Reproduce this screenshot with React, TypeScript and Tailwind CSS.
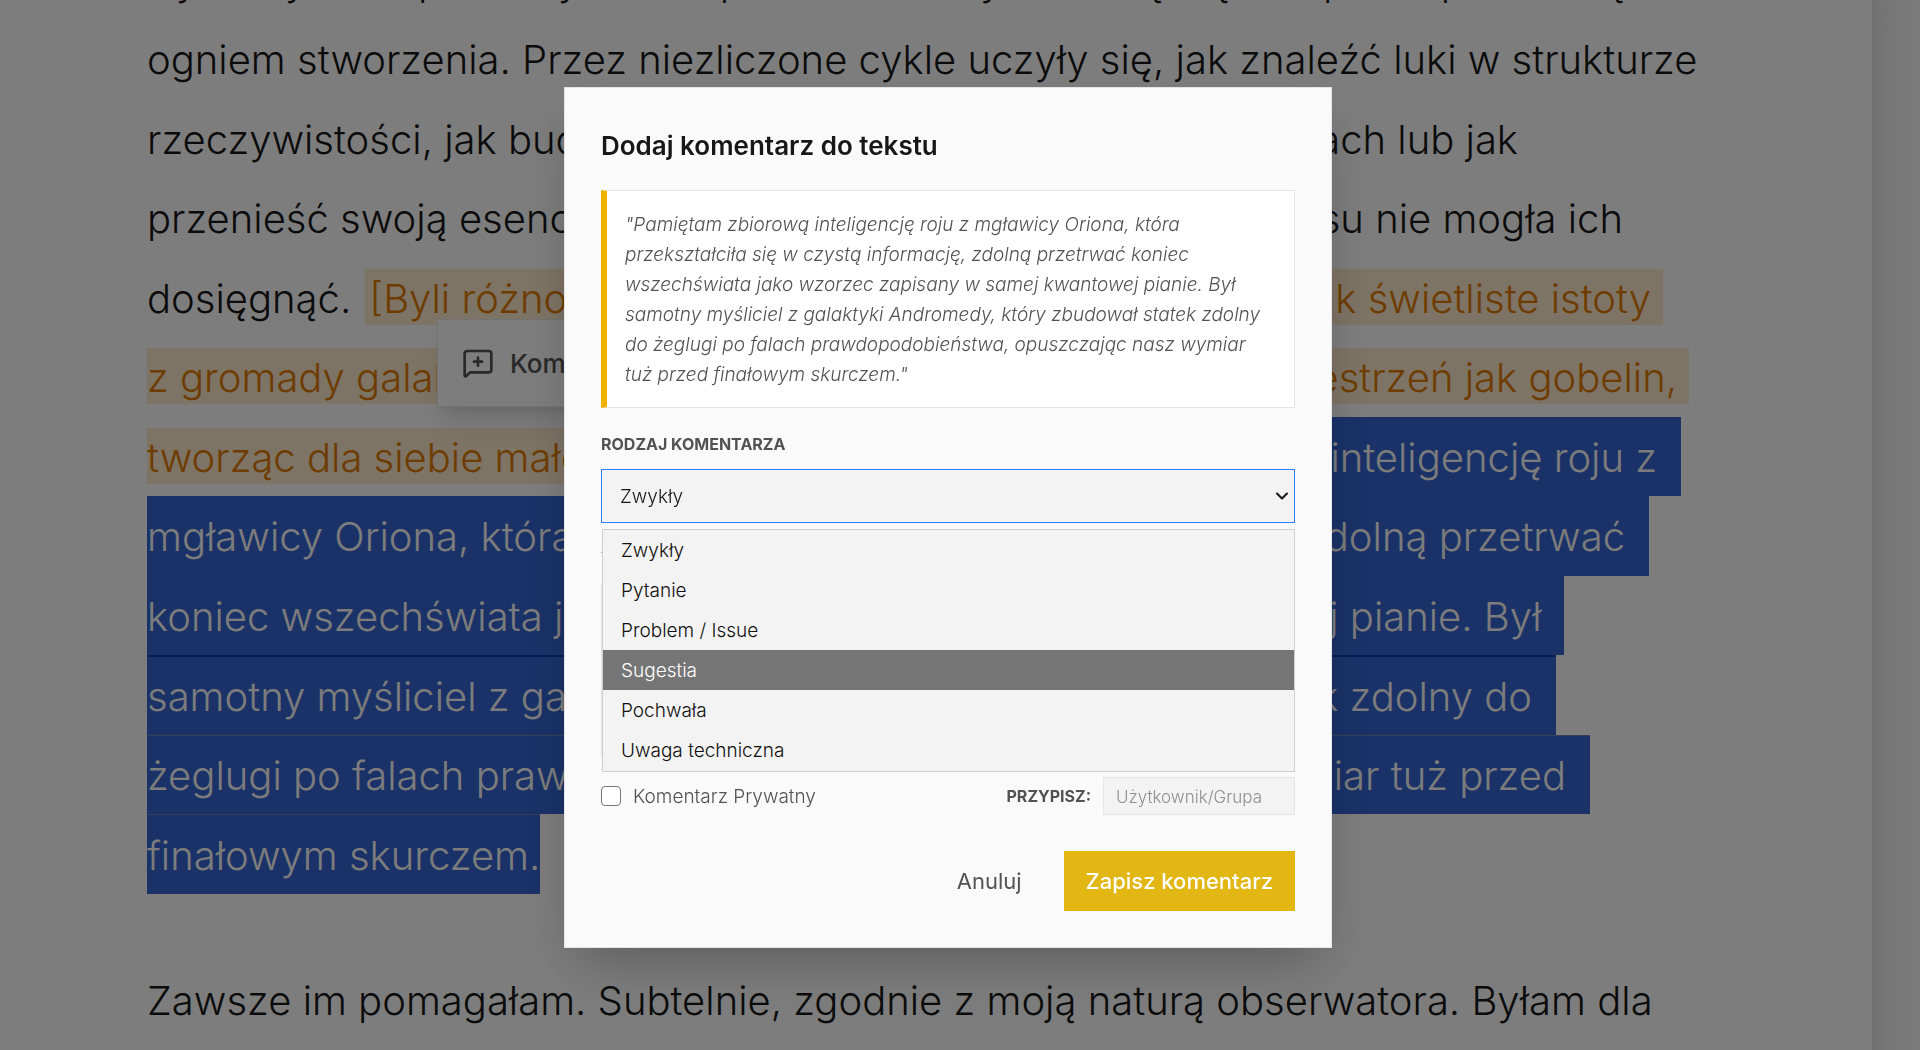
import React, { useState } from "react";
import { ChevronDown, MessageSquarePlus } from "lucide-react";

const KINDS = ["Zwykły", "Pytanie", "Problem / Issue", "Sugestia", "Pochwała", "Uwaga techniczna"];

const QUOTE =
  "\"Pamiętam zbiorową inteligencję roju z mgławicy Oriona, która przekształciła się w czystą informację, zdolną przetrwać koniec wszechświata jako wzorzec zapisany w samej kwantowej pianie. Był samotny myśliciel z galaktyki Andromedy, który zbudował statek zdolny do żeglugi po falach prawdopodobieństwa, opuszczając nasz wymiar tuż przed finałowym skurczem.\"";

const TEXT = "h-14 leading-[60px]";
const NOTE = "h-14 bg-[#fae8cb] leading-[60px] text-[#dc7900]";
const ROW = "flex items-center justify-between pb-0.5 whitespace-nowrap";
const SELECTED = "flex items-center justify-between bg-[#3464d0] pb-0.5 pr-6 whitespace-nowrap text-[#f8f8f8]";

function Article() {
  return (
    <article className="mr-12 bg-[#fafafa] pb-32 pl-[147px] text-[40px] font-light text-[#171717] shadow-2xl">
      <div className="-mt-[60px] grid auto-rows-[79px_80px] justify-items-start">
        <p className={ROW}>
          <span className={TEXT}>Cykle życia to pomosty mroku przez nieznany czas się i tę nad porze pradawną</span>
        </p>
        <p className={ROW}>
          <span className={TEXT}>ogniem stworzenia. Przez niezliczone cykle uczyły się, jak znaleźć luki w strukturze</span>
        </p>
        <p className={`${ROW} w-[1371px]`}>
          <span className={TEXT}>rzeczywistości, jak budować schronienia</span>
          <span className={TEXT}>w szczelinach lub jak</span>
        </p>
        <p className={`${ROW} w-[1476px]`}>
          <span className={TEXT}>przenieść swoją esencję tam,</span>
          <span className={TEXT}>gdzie ręka czasu nie mogła ich</span>
        </p>
        <p className={`${ROW} w-[1516px]`}>
          <span className={TEXT}>dosięgnąć.</span>
          <span className={`${NOTE} ml-3.5 grow pl-1`}>[Byli różnorodni.</span>
          <span className={`${NOTE} pr-3`}>Tkali się jak świetliste istoty</span>
        </p>
        <p className={`${ROW} w-[1542px]`}>
          <span className={`${NOTE} grow`}>z gromady galaktyk, które</span>
          <span className={`${NOTE} pr-3`}>tkały czasoprzestrzeń jak gobelin,</span>
        </p>
        <p className="flex w-[1534px] justify-between whitespace-nowrap">
          <span className="flex grow items-center pb-0.5">
            <span className={`${NOTE} grow`}>tworząc dla siebie małe światy.]</span>
          </span>
          <span className={SELECTED}>
            <span className={TEXT}>Pamiętam zbiorową inteligencję roju z</span>
          </span>
        </p>
        <p className={`${SELECTED} w-[1502px]`}>
          <span className={TEXT}>mgławicy Oriona, która przekształciła</span>
          <span className={TEXT}>się w czystą informację, zdolną przetrwać</span>
        </p>
        <p className={`${SELECTED} w-[1417px]`}>
          <span className={TEXT}>koniec wszechświata jako wzorzec</span>
          <span className={TEXT}>zapisany w samej kwantowej pianie. Był</span>
        </p>
        <p className={`${SELECTED} w-[1409px] border-t-2 border-[#0f3da6]`}>
          <span className={TEXT}>samotny myśliciel z galaktyki Andromedy,</span>
          <span className={TEXT}>który zbudował statek zdolny do</span>
        </p>
        <p className={`${SELECTED} w-[1443px] border-t border-[#6a7fb4]`}>
          <span className={TEXT}>żeglugi po falach prawdopodobieństwa,</span>
          <span className={TEXT}>opuszczając nasz wymiar tuż przed</span>
        </p>
        <p className="flex items-center border-t border-[#6a7fb4] bg-[#3464d0] pb-0.5 text-[#f8f8f8]">
          <span className={TEXT}>finałowym skurczem.</span>
        </p>
      </div>
      <div className="mt-[66px] grid auto-rows-[79px_80px] justify-items-start">
        <p className={ROW}>
          <span className={TEXT}>Zawsze im pomagałam. Subtelnie, zgodnie z moją naturą obserwatora. Byłam dla</span>
        </p>
      </div>
    </article>
  );
}

function KindPicker() {
  const [kind, setKind] = useState("Zwykły");
  const [active, setActive] = useState("Sugestia");
  return (
    <div className="relative">
      <select
        id="kind"
        value={kind}
        onChange={(e) => setKind(e.target.value)}
        className="block h-[54px] w-full appearance-none border border-[#2b7fff] bg-[#f3f3f3] px-[18px] pt-1 text-[19px] font-light text-[#171717] outline-none"
      >
        {KINDS.map((k) => (
          <option key={k}>{k}</option>
        ))}
      </select>
      <ChevronDown className="pointer-events-none absolute top-[17px] right-[3px] size-5 text-[#171717]" strokeWidth={2.5} />
      <ul
        role="listbox"
        aria-label="Rodzaj komentarza"
        className="absolute top-[60px] right-0 left-px z-10 border border-[#cfcfcf] bg-[#f3f3f3] pb-px"
      >
        {KINDS.map((k) => (
          <li
            key={k}
            role="option"
            aria-selected={k === active}
            onMouseEnter={() => setActive(k)}
            onClick={() => setKind(k)}
            className={
              k === active
                ? "h-10 bg-[#757575] px-[18px] text-[19px] leading-[42px] font-light text-white"
                : "h-10 px-[18px] text-[19px] leading-[42px] font-light text-[#101010]"
            }
          >
            {k}
          </li>
        ))}
      </ul>
    </div>
  );
}

function CommentDialog() {
  return (
    <form
      role="dialog"
      aria-labelledby="dialog-title"
      onSubmit={(e) => e.preventDefault()}
      className="w-full max-w-3xl border border-[#e5e5e5] bg-[#fafafa] p-9 shadow-2xl"
    >
      <h2 id="dialog-title" className="mt-0.5 text-[26px] leading-10 font-semibold text-[#171717]">
        Dodaj komentarz do tekstu
      </h2>
      <blockquote className="mt-6 border border-l-[6px] border-[#e5e5e5] border-l-[#f0b100] bg-white px-[18px] pt-[19px] pb-[17px] text-[19px] leading-[30px] font-light text-[#525252] italic">
        {QUOTE}
      </blockquote>
      <label htmlFor="kind" className="mt-6 mb-[13px] block text-base leading-6 font-bold text-[#525252]">
        RODZAJ KOMENTARZA
      </label>
      <KindPicker />
      <label htmlFor="note" className="mt-3 mb-[25px] block text-base leading-6 font-bold text-[#525252]">
        ADNOTACJA
      </label>
      <textarea id="note" className="block h-[174px] w-full resize-none border border-[#e5e5e5] bg-[#f3f3f3]" />
      <div className="mt-[19px] flex items-center justify-between">
        <label className="flex items-center gap-3 text-[19px] font-light text-[#525252]">
          <input type="checkbox" className="size-5 appearance-none rounded border-[1.5px] border-[#767676] bg-white" />
          <span className="pt-1">Komentarz Prywatny</span>
        </label>
        <div className="flex items-center gap-3">
          <label htmlFor="assignee" className="text-base leading-6 font-bold text-[#525252]">
            PRZYPISZ:
          </label>
          <input
            id="assignee"
            placeholder="Użytkownik/Grupa"
            className="h-[38px] w-48 border border-[#e5e5e5] bg-[#f3f3f3] px-3 pt-0.5 text-[17px] font-light outline-none placeholder:text-[#8f8f8f]"
          />
        </div>
      </div>
      <div className="mt-9 flex justify-end gap-5">
        <button type="button" className="h-[60px] px-[22px] pt-0.5 text-[22px] text-[#525252]">
          Anuluj
        </button>
        <button type="submit" className="h-[60px] bg-[#e2b714] px-[22px] pt-0.5 text-[22px] font-medium text-white">
          Zapisz komentarz
        </button>
      </div>
    </form>
  );
}

export default function App() {
  return (
    <div className="relative h-screen overflow-hidden bg-[#f5f5f5] font-['Inter',sans-serif]">
      <Article />
      <button
        type="button"
        className="absolute top-[319px] left-[437px] flex h-[88px] items-center gap-4 border border-[#e5e5e5] bg-[#fafafa] px-6 text-[26px] font-medium text-[#525252] shadow-xl"
      >
        <MessageSquarePlus className="size-8" />
        Komentuj
      </button>
      <div className="fixed inset-0 flex items-center justify-center bg-black/50 pr-6 pb-4">
        <CommentDialog />
      </div>
    </div>
  );
}
